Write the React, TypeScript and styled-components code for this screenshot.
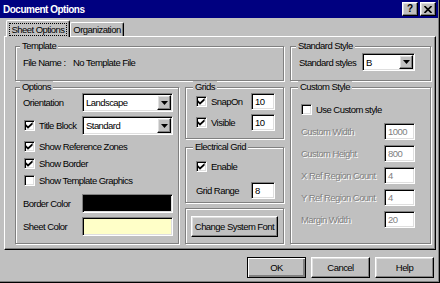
import React from "react";
import styled, { createGlobalStyle, css } from "styled-components";

const GlobalStyle = createGlobalStyle`
  html, body {
    margin: 0;
    padding: 0;
    background: #c0c0c0;
  }
  body {
    font-family: "Liberation Sans", Arial, sans-serif;
    font-size: 9.5px;
    letter-spacing: -0.55px;
    color: #000;
  }
`;

const sunken = css`
  box-sizing: border-box;
  border: 1px solid;
  border-color: #808080 #fff #fff #808080;
  box-shadow: inset 1px 1px 0 #000, inset -1px -1px 0 #dfdfdf;
`;

const raised = css`
  box-sizing: border-box;
  border: 1px solid;
  border-color: #fff #000 #000 #fff;
  box-shadow: inset -1px -1px 0 #808080, inset 1px 1px 0 #dfdfdf;
  background: #c0c0c0;
`;

const Window = styled.div`
  width: 440px;
  height: 283px;
  box-sizing: border-box;
  background: #c0c0c0;
  border-right: 1px solid #000;
  border-bottom: 1px solid #000;
  box-shadow: inset -1px -1px 0 #808080;
  padding: 0 1px 1px 0;
  display: flex;
  flex-direction: column;
`;

const TitleBar = styled.div`
  height: 18px;
  background: #000080;
  display: flex;
  align-items: center;
  justify-content: space-between;
  padding: 0 2px 0 3px;
`;

const Title = styled.span`
  color: #fff;
  font-weight: bold;
  font-size: 10px;
  letter-spacing: -0.5px;
`;

const TitleButtons = styled.div`
  display: flex;
  gap: 2px;
`;

const TitleButton = styled.div`
  ${raised};
  width: 16px;
  height: 14px;
  display: flex;
  align-items: center;
  justify-content: center;
  font-weight: bold;
  font-size: 10px;
  letter-spacing: 0;
  line-height: 1;
`;

const Body = styled.div`
  flex: 1;
  display: flex;
  flex-direction: column;
  padding: 2px 2px 0 4px;
`;

const TabStrip = styled.div`
  display: flex;
  align-items: flex-end;
  height: 16px;
  padding-left: 2px;
  position: relative;
  z-index: 1;
`;

const Tab = styled.div<{ $active?: boolean; $w: number }>`
  box-sizing: border-box;
  width: ${(p) => p.$w}px;
  height: ${(p) => (p.$active ? 17 : 14)}px;
  margin-bottom: ${(p) => (p.$active ? -1 : 0)}px;
  background: #c0c0c0;
  border: 1px solid;
  border-bottom: none;
  border-color: #fff #000 #000 #fff;
  border-radius: 2px 2px 0 0;
  box-shadow: inset -1px 0 0 #808080;
  display: flex;
  align-items: center;
  justify-content: center;
`;

const TabLabel = styled.span<{ $focus?: boolean }>`
  padding: 0 1px;
  line-height: 11px;
  outline: ${(p) => (p.$focus ? "1px dotted #000" : "none")};
`;

const Panel = styled.div`
  box-sizing: border-box;
  height: 214px;
  border: 1px solid;
  border-color: #fff #000 #000 #fff;
  box-shadow: inset -1px -1px 0 #808080;
  padding: 3px 5px 0 10px;
`;

const PanelGrid = styled.div`
  display: grid;
  grid-template-columns: 164px 99px 141px;
  grid-template-rows: 41px 163px;
  column-gap: 6px;
`;

const Group = styled.fieldset<{ $span?: number; $pad?: string; $h?: number }>`
  margin: 0;
  min-width: 0;
  box-sizing: border-box;
  padding: ${(p) => p.$pad ?? "0 6px 0 7px"};
  border: 1px solid #808080;
  box-shadow: inset 1px 1px 0 #fff, 1px 1px 0 #fff;
  grid-column: span ${(p) => p.$span ?? 1};
  ${(p) => (p.$h ? `height: ${p.$h}px; flex: none;` : "")}
`;

const Legend = styled.legend`
  padding: 0 2px;
  margin-left: -3px;
  line-height: 12px;
  background: #c0c0c0;
`;

const Column = styled.div`
  display: flex;
  flex-direction: column;
  gap: 2px;
`;

const Row = styled.div<{ $h?: number; $mt?: number }>`
  display: flex;
  align-items: center;
  height: ${(p) => p.$h ?? 17}px;
  margin-top: ${(p) => p.$mt ?? 0}px;
  white-space: nowrap;
`;

const Label = styled.span<{ $w?: number; $disabled?: boolean }>`
  flex: none;
  width: ${(p) => (p.$w ? `${p.$w}px` : "auto")};
  color: ${(p) => (p.$disabled ? "#808080" : "#000")};
  text-shadow: ${(p) => (p.$disabled ? "1px 1px 0 #fff" : "none")};
`;

const CheckBox = styled.span<{ $ml?: number }>`
  ${sunken};
  flex: none;
  width: 11px;
  height: 11px;
  margin-left: ${(p) => p.$ml ?? 0}px;
  margin-right: 4px;
  background: #fff;
  display: flex;
  align-items: center;
  justify-content: center;
`;

const SelectBox = styled.div<{ $w: number; $h?: number }>`
  ${sunken};
  width: ${(p) => p.$w}px;
  height: ${(p) => p.$h ?? 18}px;
  background: #fff;
  display: flex;
  align-items: stretch;
  padding: 1px 1px 1px 3px;
`;

const SelectText = styled.span`
  flex: 1;
  display: flex;
  align-items: center;
`;

const DropButton = styled.span`
  ${raised};
  width: 14px;
  display: flex;
  align-items: center;
  justify-content: center;
`;

const TextField = styled.div<{ $w: number; $disabled?: boolean }>`
  ${sunken};
  width: ${(p) => p.$w}px;
  height: 17px;
  background: #fff;
  padding-left: 3px;
  display: flex;
  align-items: center;
  color: ${(p) => (p.$disabled ? "#808080" : "#000")};
`;

const Swatch = styled.div<{ $color: string }>`
  ${sunken};
  width: 91px;
  height: 19px;
  background: ${(p) => p.$color};
`;

const Button = styled.div<{ $w: number; $h?: number; $default?: boolean }>`
  ${raised};
  width: ${(p) => p.$w}px;
  height: ${(p) => p.$h ?? 21}px;
  display: flex;
  align-items: center;
  justify-content: center;
  white-space: nowrap;
  ${(p) =>
    p.$default &&
    css`
      border-color: #000;
      box-shadow: inset 1px 1px 0 #fff, inset -1px -1px 0 #808080,
        inset -2px -2px 0 #808080;
    `}
`;

const FontBox = styled.div`
  box-sizing: border-box;
  height: 37px;
  margin-top: 3px;
  border: 1px solid #808080;
  box-shadow: inset 1px 1px 0 #fff, 1px 1px 0 #fff;
  display: flex;
  align-items: center;
  justify-content: center;
`;

const ButtonRow = styled.div`
  display: flex;
  justify-content: flex-end;
  gap: 5px;
  padding: 7px 2px 0 0;
`;

const Check = () => (
  <svg width="7" height="7" viewBox="0 0 7 7">
    <path d="M0 2.2 L2 4.2 L6.6 0 L6.6 2.4 L2 6.8 L0 4.8 Z" fill="#000" />
  </svg>
);

const Arrow = () => (
  <svg width="7" height="4" viewBox="0 0 7 4">
    <path d="M0 0 H7 L3.5 4 Z" fill="#000" />
  </svg>
);

const CloseGlyph = () => (
  <svg width="8" height="7" viewBox="0 0 8 7">
    <path d="M0.5 0 L7.5 7 M7.5 0 L0.5 7" stroke="#000" strokeWidth="1.6" />
  </svg>
);

const CheckField = ({ checked, label, ml }: { checked?: boolean; label?: string; ml?: number }) => (
  <>
    <CheckBox $ml={ml}>{checked && <Check />}</CheckBox>
    {label && <span>{label}</span>}
  </>
);

const Select = ({ w, value, h }: { w: number; value: string; h?: number }) => (
  <SelectBox $w={w} $h={h}>
    <SelectText>{value}</SelectText>
    <DropButton>
      <Arrow />
    </DropButton>
  </SelectBox>
);

const customFields = [
  ["Custom Width", "1000"],
  ["Custom Height", "800"],
  ["X Ref Region Count", "4"],
  ["Y Ref Region Count", "4"],
  ["Margin Width", "20"],
];

export default function App() {
  return (
    <>
      <GlobalStyle />
      <Window>
        <TitleBar>
          <Title>Document Options</Title>
          <TitleButtons>
            <TitleButton>?</TitleButton>
            <TitleButton>
              <CloseGlyph />
            </TitleButton>
          </TitleButtons>
        </TitleBar>
        <Body>
          <TabStrip>
            <Tab $active $w={64}>
              <TabLabel $focus>Sheet Options</TabLabel>
            </Tab>
            <Tab $w={54}>
              <TabLabel>Organization</TabLabel>
            </Tab>
          </TabStrip>
          <Panel>
            <PanelGrid>
              <Group $span={2}>
                <Legend>Template</Legend>
                <Row $mt={2}>
                  <Label $w={50}>File Name :</Label>
                  <span>No Template File</span>
                </Row>
              </Group>
              <Group $pad="0 6px 0 8px">
                <Legend>Standard Style</Legend>
                <Row $h={18} $mt={1}>
                  <Label $w={63}>Standard styles</Label>
                  <Select w={53} value="B" />
                </Row>
              </Group>

              <Group $pad="0 5px 0 7px">
                <Legend>Options</Legend>
                <Row $h={19}>
                  <Label $w={59}>Orientation</Label>
                  <Select w={91} h={19} value="Landscape" />
                </Row>
                <Row $h={19} $mt={4}>
                  <Label $w={59}>
                    <Row>
                      <CheckField checked ml={1} label="Title Block" />
                    </Row>
                  </Label>
                  <Select w={91} h={19} value="Standard" />
                </Row>
                <Row $mt={3}>
                  <CheckField checked ml={1} label="Show Reference Zones" />
                </Row>
                <Row>
                  <CheckField checked ml={1} label="Show Border" />
                </Row>
                <Row>
                  <CheckField ml={1} label="Show Template Graphics" />
                </Row>
                <Row $h={19} $mt={5}>
                  <Label $w={59}>Border Color</Label>
                  <Swatch $color="#000" />
                </Row>
                <Row $h={19} $mt={4}>
                  <Label $w={59}>Sheet Color</Label>
                  <Swatch $color="#ffffc8" />
                </Row>
              </Group>

              <Column>
                <Group $h={58} $pad="0 6px 0 10px">
                  <Legend>Grids</Legend>
                  <Row>
                    <CheckField checked />
                    <Label $w={40}>SnapOn</Label>
                    <TextField $w={24}>10</TextField>
                  </Row>
                  <Row $mt={4}>
                    <CheckField checked />
                    <Label $w={40}>Visible</Label>
                    <TextField $w={24}>10</TextField>
                  </Row>
                </Group>
                <Group $h={62} $pad="0 6px 0 10px">
                  <Legend>Electrical Grid</Legend>
                  <Row $mt={5}>
                    <CheckField checked label="Enable" />
                  </Row>
                  <Row $mt={7}>
                    <Label $w={55}>Grid Range</Label>
                    <TextField $w={24}>8</TextField>
                  </Row>
                </Group>
                <FontBox>
                  <Button $w={87}>Change System Font</Button>
                </FontBox>
              </Column>

              <Group $pad="0 6px 0 10px">
                <Legend>Custom Style</Legend>
                <Row $mt={8}>
                  <CheckField label="Use Custom style" />
                </Row>
                {customFields.map(([label, value], i) => (
                  <Row key={label} $h={16} $mt={i === 0 ? 5 : 6}>
                    <Label $w={83} $disabled>
                      {label}
                    </Label>
                    <TextField $w={31} $disabled>
                      {value}
                    </TextField>
                  </Row>
                ))}
              </Group>
            </PanelGrid>
          </Panel>
          <ButtonRow>
            <Button $w={59} $default>
              OK
            </Button>
            <Button $w={59}>Cancel</Button>
            <Button $w={59}>Help</Button>
          </ButtonRow>
        </Body>
      </Window>
    </>
  );
}
